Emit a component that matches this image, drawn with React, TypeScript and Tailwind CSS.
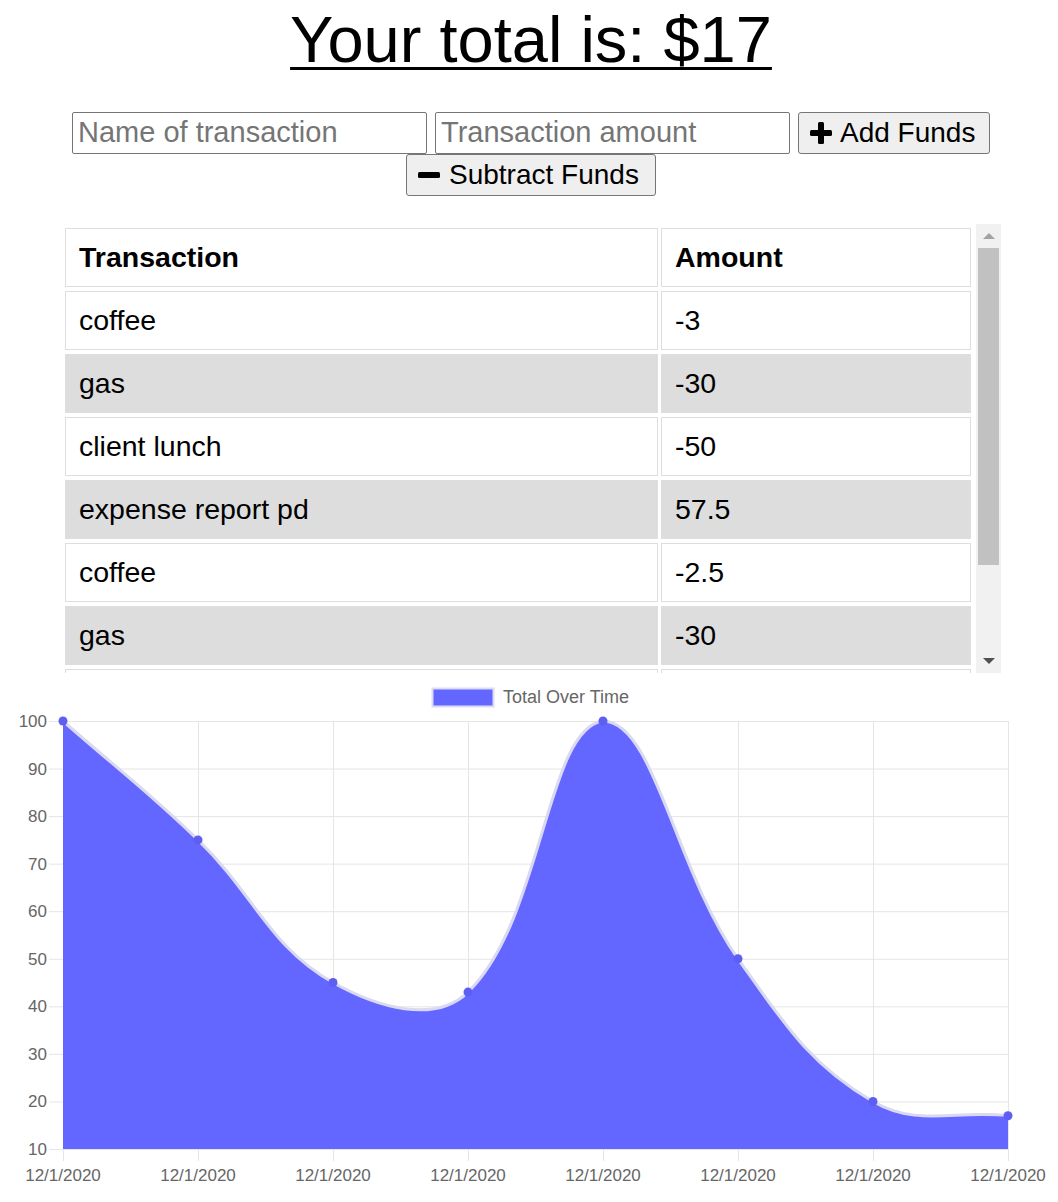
import React from "react";

const rows: [string, string][] = [
    ["coffee", "-3"],
    ["gas", "-30"],
    ["client lunch", "-50"],
    ["expense report pd", "57.5"],
    ["coffee", "-2.5"],
    ["gas", "-30"],
    ["", ""],
];

const values = [100, 75, 45, 43, 100, 50, 20, 17];
const yTicks = [100, 90, 80, 70, 60, 50, 40, 30, 20, 10];

const left = 63;
const step = 135;
const top = 41;
const bottom = 469;
const right = left + step * 7;

const yOf = (v: number) => bottom - ((v - 10) / 90) * (bottom - top);

// same spline as the chart library: tension 0.4, control points kept in the plot area
function curvePath(pts: { x: number; y: number }[]) {
    const t = 0.4;
    const ctrl = pts.map((cur, i) => {
        const prev = pts[i - 1] || cur;
        const next = pts[i + 1] || cur;
        const d01 = Math.hypot(cur.x - prev.x, cur.y - prev.y);
        const d12 = Math.hypot(next.x - cur.x, next.y - cur.y);
        let s01 = d01 / (d01 + d12);
        let s12 = d12 / (d01 + d12);
        if (isNaN(s01)) s01 = 0;
        if (isNaN(s12)) s12 = 0;
        const fa = t * s01;
        const fb = t * s12;
        const clamp = (y: number) => Math.max(top, Math.min(bottom, y));
        return {
            px: cur.x - fa * (next.x - prev.x),
            py: clamp(cur.y - fa * (next.y - prev.y)),
            nx: cur.x + fb * (next.x - prev.x),
            ny: clamp(cur.y + fb * (next.y - prev.y)),
        };
    });
    let d = `M${pts[0].x},${pts[0].y}`;
    for (let i = 1; i < pts.length; i++) {
        d += ` C${ctrl[i - 1].nx},${ctrl[i - 1].ny} ${ctrl[i].px},${ctrl[i].py} ${pts[i].x},${pts[i].y}`;
    }
    return d;
}

function Chart() {
    const pts = values.map((v, i) => ({ x: left + i * step, y: yOf(v) }));
    const line = curvePath(pts);
    const area = `${line} L${right},${bottom} L${left},${bottom} Z`;
    return (
        <svg width="1058" height="522" viewBox="0 0 1058 522" className="block" style={{ fontFamily: '"Liberation Sans", Arial, sans-serif' }}>
            <rect x="432.5" y="8.5" width="61" height="18" fill="#6366ff" stroke="#dcdcf5" strokeWidth="2" />
            <text x="503" y="23" fontSize="18" fill="#666">Total Over Time</text>
            {yTicks.map((v) => (
                <g key={v}>
                    <line x1="49" x2={right} y1={yOf(v) + 0.5} y2={yOf(v) + 0.5} stroke="#e5e5e5" strokeWidth="1" />
                    <text x="47" y={yOf(v) + 6} fontSize="17" fill="#666" textAnchor="end">{v}</text>
                </g>
            ))}
            {values.map((_, i) => (
                <g key={i}>
                    <line x1={left + i * step + 0.5} x2={left + i * step + 0.5} y1={top} y2={bottom + 12} stroke="#e5e5e5" strokeWidth="1" />
                    <text x={left + i * step} y="501" fontSize="17" fill="#666" textAnchor="middle">12/1/2020</text>
                </g>
            ))}
            <path d={area} fill="#6366ff" />
            <path d={line} fill="none" stroke="#d9d9f2" strokeWidth="3" />
            {pts.map((p, i) => (
                <circle key={i} cx={p.x} cy={p.y} r="4.5" fill="#5e5ef2" />
            ))}
        </svg>
    );
}

function PlusIcon() {
    return (
        <svg width="22" height="22" viewBox="0 0 22 22" className="shrink-0">
            <rect x="8" y="0" width="6" height="22" rx="1.5" fill="#000" />
            <rect x="0" y="8" width="22" height="6" rx="1.5" fill="#000" />
        </svg>
    );
}

function MinusIcon() {
    return (
        <svg width="22" height="22" viewBox="0 0 22 22" className="shrink-0">
            <rect x="0" y="8" width="22" height="6" rx="1.5" fill="#000" />
        </svg>
    );
}

export default function App() {
    return (
        <div className="w-[1058px] bg-white text-black font-['Liberation_Sans',Arial,sans-serif]">
            <h1 className="pt-[2px] pl-[4px] text-center text-[65px] leading-[75px] underline decoration-[3px] underline-offset-[5px]">
                Your total is: $17
            </h1>

            <form className="mt-[35px] flex flex-wrap justify-center gap-x-2 pl-[4px] text-[28px]">
                <input
                    type="text"
                    placeholder="Name of transaction"
                    className="h-[42px] w-[355px] rounded-[2px] border border-[#767676] px-[5px] text-[29px] placeholder:text-[#757575] outline-none"
                />
                <input
                    type="number"
                    placeholder="Transaction amount"
                    className="h-[42px] w-[355px] rounded-[2px] border border-[#767676] px-[5px] text-[29px] placeholder:text-[#757575] outline-none"
                />
                <button type="button" className="flex h-[42px] w-[192px] items-center gap-2 rounded-[3px] border border-[#767676] bg-[#efefef] pl-[11px]">
                    <PlusIcon />
                    Add Funds
                </button>
                <button type="button" className="flex h-[42px] w-[250px] items-center gap-[9px] rounded-[3px] border border-[#767676] bg-[#efefef] pl-[11px]">
                    <MinusIcon />
                    Subtract Funds
                </button>
            </form>

            <div className="mt-[28px] ml-[62px] flex h-[449px] w-[939px]">
                <div className="h-full flex-1 overflow-hidden">
                    <table className="w-[912px] border-separate border-spacing-x-[3px] border-spacing-y-[4px] text-[28.5px]">
                        <thead>
                            <tr>
                                <th className="h-[59px] w-[593px] border border-[#dedede] pl-[13px] text-left font-bold">Transaction</th>
                                <th className="h-[59px] border border-[#dedede] pl-[13px] text-left font-bold">Amount</th>
                            </tr>
                        </thead>
                        <tbody>
                            {rows.map(([name, amount], i) => (
                                <tr key={i} className={i % 2 === 1 ? "bg-[#dddddd]" : ""}>
                                    <td className="h-[59px] border border-[#dedede] pl-[13px]">{name}</td>
                                    <td className="h-[59px] border border-[#dedede] pl-[13px]">{amount}</td>
                                </tr>
                            ))}
                        </tbody>
                    </table>
                </div>
                <div className="flex w-[25px] flex-col items-center bg-[#f1f1f1]">
                    <div className="flex h-[24px] items-center">
                        <div className="h-0 w-0 border-x-[6px] border-b-[6px] border-x-transparent border-b-[#a3a3a3]" />
                    </div>
                    <div className="h-[317px] w-[21px] bg-[#c1c1c1]" />
                    <div className="flex flex-1 items-end pb-[9px]">
                        <div className="h-0 w-0 border-x-[6px] border-t-[6px] border-x-transparent border-t-[#505050]" />
                    </div>
                </div>
            </div>

            <div className="mt-[7px]">
                <Chart />
            </div>
        </div>
    );
}
